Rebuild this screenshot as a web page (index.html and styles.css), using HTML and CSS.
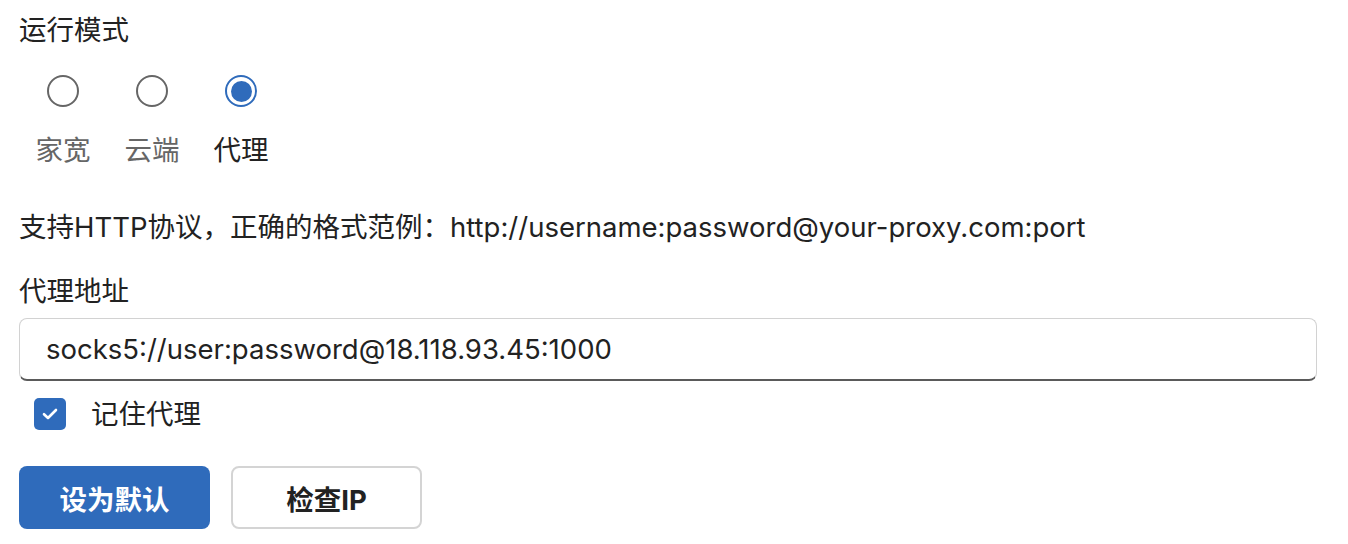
FILE: index.html
```html
<!DOCTYPE html>
<html lang="zh-CN">
<head>
    <meta charset="UTF-8">
    <meta name="viewport" content="width=device-width, initial-scale=1.0">
    <title>代理设置</title>
    <link rel="stylesheet" href="styles.css">
</head>
<body>
    <div class="settings">
        <div class="field-label mode-title">运行模式</div>

        <div class="radio-group">
            <label class="radio-option">
                <span class="radio"></span>
                <span class="radio-text">家宽</span>
            </label>
            <label class="radio-option">
                <span class="radio"></span>
                <span class="radio-text">云端</span>
            </label>
            <label class="radio-option selected">
                <span class="radio"></span>
                <span class="radio-text">代理</span>
            </label>
        </div>

        <p class="hint">支持HTTP协议，正确的格式范例：http://username:password@your-proxy.com:port</p>

        <div class="field-label">代理地址</div>
        <div class="proxy-input">socks5://user:password@18.118.93.45:1000</div>

        <label class="check-row">
            <span class="checkbox">
                <svg width="16" height="12" viewBox="0 0 16 12"><path d="M2 6.2 L6 10 L14 2" fill="none" stroke="#fff" stroke-width="2.6" stroke-linecap="round" stroke-linejoin="round"/></svg>
            </span>
            <span class="check-text">记住代理</span>
        </label>

        <div class="button-row">
            <button class="btn btn-primary">设为默认</button>
            <button class="btn btn-default">检查IP</button>
        </div>
    </div>
</body>
</html>
```

FILE: styles.css
```css
body {
    margin: 0;
    padding: 0;
    background: #fff;
    color: #222;
    font-family: Inter, "Noto Sans CJK SC", sans-serif;
    font-size: 27.5px;
}
.settings {
    display: flex;
    flex-direction: column;
    align-items: flex-start;
    padding: 10px 31px 0 19px;
}
.field-label {
    line-height: 40px;
}
.radio-group {
    display: flex;
    gap: 33px;
    margin-top: 25px;
    padding-left: 16px;
}
.radio-option {
    display: flex;
    flex-direction: column;
    align-items: center;
    width: 56px;
}
.radio {
    box-sizing: border-box;
    width: 32px;
    height: 32px;
    border: 2px solid #666;
    border-radius: 50%;
    display: flex;
    align-items: center;
    justify-content: center;
}
.radio-option.selected .radio {
    border: 2.5px solid #2f6bbb;
}
.radio-option.selected .radio::after {
    content: "";
    width: 21px;
    height: 21px;
    border-radius: 50%;
    background: #2f6bbb;
}
.radio-text {
    margin-top: 23px;
    line-height: 40px;
    color: #666;
}
.radio-option.selected .radio-text {
    color: #222;
}
.hint {
    margin: 37px 0 0;
    line-height: 40px;
}
.hint + .field-label {
    margin-top: 24px;
}
.proxy-input {
    box-sizing: border-box;
    align-self: stretch;
    margin-top: 7px;
    height: 63px;
    padding: 0 26px;
    display: flex;
    align-items: center;
    border: 1.5px solid #d2d2d2;
    border-bottom: 2px solid #5a5a5a;
    border-radius: 8px;
}
.check-row {
    display: flex;
    align-items: center;
    margin-top: 17px;
    margin-left: 15px;
    gap: 25px;
    line-height: 32px;
}
.checkbox {
    width: 32px;
    height: 32px;
    border-radius: 5px;
    background: #2f6bbb;
    display: flex;
    align-items: center;
    justify-content: center;
}
.button-row {
    display: flex;
    gap: 21px;
    margin-top: 36px;
}
.btn {
    box-sizing: border-box;
    width: 191px;
    height: 63px;
    border-radius: 8px;
    font-family: inherit;
    font-size: 27.5px;
    font-weight: bold;
    cursor: pointer;
}
.btn-primary {
    background: #2f6bbb;
    border: none;
    color: #fff;
}
.btn-default {
    background: #fff;
    border: 2px solid #d4d4d4;
    color: #222;
}
```
